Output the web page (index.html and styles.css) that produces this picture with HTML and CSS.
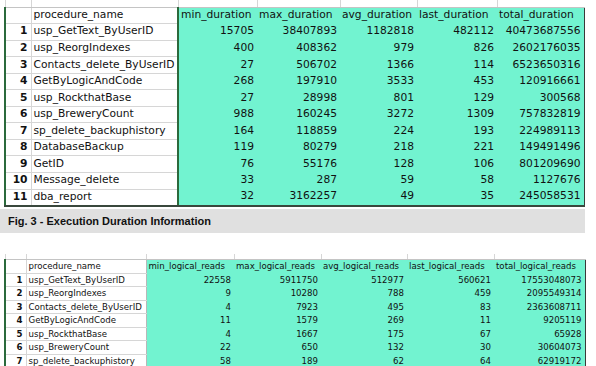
FILE: index.html
```html
<!DOCTYPE html>
<html lang="en">
<head>
  <meta charset="UTF-8">
  <title>Execution Duration Information</title>
  <link rel="stylesheet" href="styles.css">
</head>
<body>
  <!-- fig 3 : durations -->
  <table class="sheet sheet-lg">
    <colgroup>
      <col class="c-num"><col class="c-name"><col class="c-min"><col class="c-max">
      <col class="c-avg"><col class="c-last"><col class="c-total">
    </colgroup>
    <tr class="edge"><td></td><td></td><td></td><td></td><td></td><td></td><td></td></tr>
    <tr class="head">
      <td class="num"></td><td class="name">procedure_name</td>
      <td class="val">min_duration</td><td class="val">max_duration</td><td class="val">avg_duration</td>
      <td class="val">last_duration</td><td class="val last">total_duration</td>
    </tr>
    <tr><td class="num">1</td><td class="name">usp_GetText_ByUserID</td><td class="val">15705</td><td class="val">38407893</td><td class="val">1182818</td><td class="val">482112</td><td class="val last">40473687556</td></tr>
    <tr><td class="num">2</td><td class="name">usp_ReorgIndexes</td><td class="val">400</td><td class="val">408362</td><td class="val">979</td><td class="val">826</td><td class="val last">2602176035</td></tr>
    <tr><td class="num">3</td><td class="name">Contacts_delete_ByUserID</td><td class="val">27</td><td class="val">506702</td><td class="val">1366</td><td class="val">114</td><td class="val last">6523650316</td></tr>
    <tr><td class="num">4</td><td class="name">GetByLogicAndCode</td><td class="val">268</td><td class="val">197910</td><td class="val">3533</td><td class="val">453</td><td class="val last">120916661</td></tr>
    <tr><td class="num">5</td><td class="name">usp_RockthatBase</td><td class="val">27</td><td class="val">28998</td><td class="val">801</td><td class="val">129</td><td class="val last">300568</td></tr>
    <tr><td class="num">6</td><td class="name">usp_BreweryCount</td><td class="val">988</td><td class="val">160245</td><td class="val">3272</td><td class="val">1309</td><td class="val last">757832819</td></tr>
    <tr><td class="num">7</td><td class="name">sp_delete_backuphistory</td><td class="val">164</td><td class="val">118859</td><td class="val">224</td><td class="val">193</td><td class="val last">224989113</td></tr>
    <tr><td class="num">8</td><td class="name">DatabaseBackup</td><td class="val">119</td><td class="val">80279</td><td class="val">218</td><td class="val">221</td><td class="val last">149491496</td></tr>
    <tr><td class="num">9</td><td class="name">GetID</td><td class="val">76</td><td class="val">55176</td><td class="val">128</td><td class="val">106</td><td class="val last">801209690</td></tr>
    <tr><td class="num">10</td><td class="name">Message_delete</td><td class="val">33</td><td class="val">287</td><td class="val">59</td><td class="val">58</td><td class="val last">1127676</td></tr>
    <tr class="end"><td class="num">11</td><td class="name">dba_report</td><td class="val">32</td><td class="val">3162257</td><td class="val">49</td><td class="val">35</td><td class="val last">245058531</td></tr>
  </table>

  <p class="caption">Fig. 3 - Execution Duration Information</p>

  <!-- logical reads -->
  <table class="sheet sheet-sm">
    <colgroup>
      <col class="c-num"><col class="c-name"><col class="c-min"><col class="c-max">
      <col class="c-avg"><col class="c-last"><col class="c-total">
    </colgroup>
    <tr class="edge"><td></td><td></td><td></td><td></td><td></td><td></td><td></td></tr>
    <tr class="head">
      <td class="num"></td><td class="name">procedure_name</td>
      <td class="val">min_logical_reads</td><td class="val">max_logical_reads</td><td class="val">avg_logical_reads</td>
      <td class="val">last_logical_reads</td><td class="val last">total_logical_reads</td>
    </tr>
    <tr><td class="num">1</td><td class="name">usp_GetText_ByUserID</td><td class="val">22558</td><td class="val">5911750</td><td class="val">512977</td><td class="val">560621</td><td class="val last">17553048073</td></tr>
    <tr><td class="num">2</td><td class="name">usp_ReorgIndexes</td><td class="val">9</td><td class="val">10280</td><td class="val">788</td><td class="val">459</td><td class="val last">2095549314</td></tr>
    <tr><td class="num">3</td><td class="name">Contacts_delete_ByUserID</td><td class="val">4</td><td class="val">7923</td><td class="val">495</td><td class="val">83</td><td class="val last">2363608711</td></tr>
    <tr><td class="num">4</td><td class="name">GetByLogicAndCode</td><td class="val">11</td><td class="val">1579</td><td class="val">269</td><td class="val">11</td><td class="val last">9205119</td></tr>
    <tr><td class="num">5</td><td class="name">usp_RockthatBase</td><td class="val">4</td><td class="val">1667</td><td class="val">175</td><td class="val">67</td><td class="val last">65928</td></tr>
    <tr><td class="num">6</td><td class="name">usp_BreweryCount</td><td class="val">22</td><td class="val">650</td><td class="val">132</td><td class="val">30</td><td class="val last">30604073</td></tr>
    <tr><td class="num">7</td><td class="name">sp_delete_backuphistory</td><td class="val">58</td><td class="val">189</td><td class="val">62</td><td class="val">64</td><td class="val last">62919172</td></tr>
  </table>
</body>
</html>
```

FILE: styles.css
```css
:root {
  --teal: #72f3d0;
  --grid: #d6d6d6;
  --edge-green: #2b6a3c;
  --band: #e0e0e0;
  --ink: #111;
}
html, body {
  margin: 0;
  padding: 0;
  background: #fff;
  overflow: hidden;
}

/* ───────── sheet ───────── */
.sheet {
  border-collapse: collapse;
  table-layout: fixed;
  margin-left: 4px;
  font-family: "DejaVu Sans", Verdana, sans-serif;
  color: var(--ink);
}
.sheet td {
  padding: 0 3px 0 2px;
  white-space: nowrap;
  overflow: hidden;
  line-height: 1;
}
.sheet .edge td {
  background: #fff;
  border-left: 1px solid var(--grid);
  border-bottom: 1px solid #c4c4c4;
}
.sheet .num {
  text-align: right;
  font-weight: bold;
  border-left: 2px solid var(--edge-green);
  border-bottom: 1px solid var(--grid);
  border-right: 1px solid var(--grid);
}
.sheet .name {
  border-bottom: 1px solid var(--grid);
}
.sheet .val {
  background: var(--teal);
  text-align: right;
}
.sheet .head .val { text-align: left; }
.sheet .last { border-right: 1px solid #3a3a3a; }
.sheet .end td { border-bottom: 2px solid #39473c; }

/* big table */
.sheet-lg {
  width: 579px;
  font-size: 10.7px;
}
.sheet-lg .edge { height: 7px; }
.sheet-lg tr { height: 16.55px; }
.sheet-lg .name { border-right: 2px solid var(--edge-green); }
.sheet-lg .c-num { width: 26px; }
.sheet-lg .c-name { width: 147px; }
.sheet-lg .c-min { width: 79px; }
.sheet-lg .c-max { width: 83px; }
.sheet-lg .c-avg { width: 77px; }
.sheet-lg .c-last { width: 80px; }
.sheet-lg .c-total { width: 87px; }

/* small table */
.sheet-sm {
  width: 580px;
  font-size: 8.6px;
}
.sheet-sm .edge { height: 6px; }
.sheet-sm tr { height: 13.5px; }
.sheet-sm .name { border-right: 1px solid #b8b8b8; }
.sheet-sm .c-num { width: 21px; }
.sheet-sm .c-name { width: 120px; }
.sheet-sm .c-min { width: 88px; }
.sheet-sm .c-max { width: 87px; }
.sheet-sm .c-avg { width: 86px; }
.sheet-sm .c-last { width: 87px; }
.sheet-sm .c-total { width: 91px; }

/* ───────── caption ───────── */
.caption {
  width: 577px;
  margin: 2px 0 21px;
  padding: 0 0 0 8px;
  height: 24px;
  line-height: 24px;
  background: var(--band);
  font-family: "Liberation Sans", Arial, sans-serif;
  font-size: 11px;
  font-weight: bold;
  color: #111;
}
```
